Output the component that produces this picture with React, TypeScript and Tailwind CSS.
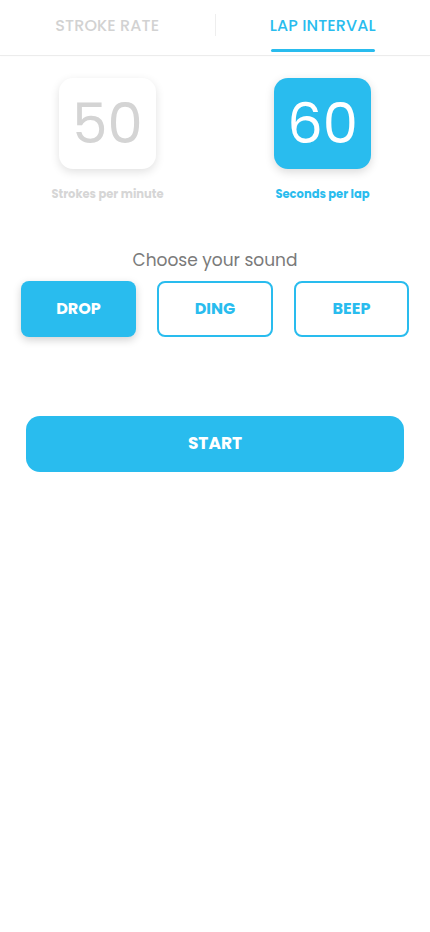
import React from "react";

const font = { fontFamily: "Poppins, 'Open Sans', 'Noto Sans', sans-serif" };

export default function App() {
  return (
    <div className="w-[430px] min-h-[932px] bg-white" style={font}>
      {/* Tabs */}
      <div className="relative flex h-[56px] border-b border-[#ececec] shadow-[0_-1px_3px_rgba(0,0,0,0.06)]">
        <div className="flex-1 flex items-center justify-center">
          <span className="text-[16px] font-medium text-[#d2d2d2] tracking-[0.1px] mb-[4px]">STROKE RATE</span>
        </div>
        <div className="w-px h-[22px] bg-[#eeeeee] mt-[14px]" />
        <div className="relative flex-1 flex items-center justify-center">
          <span className="text-[16px] font-medium text-[#29bcee] tracking-[0.1px] mb-[4px]">LAP INTERVAL</span>
          <div className="absolute left-[55px] right-[55px] bottom-[3px] h-[3px] bg-[#29bcee] rounded-full" />
        </div>
      </div>

      {/* Values */}
      <div className="flex mt-[22px]">
        <div className="flex-1 flex flex-col items-center">
          <div className="w-[97px] h-[91px] rounded-[14px] bg-white shadow-[0_3px_10px_rgba(0,0,0,0.12)] flex items-center justify-center">
            <span className="text-[56px] leading-none text-[#d4d4d4]">50</span>
          </div>
          <span className="mt-[17px] text-[11.5px] font-bold text-[#d6d6d6]">Strokes per minute</span>
        </div>
        <div className="flex-1 flex flex-col items-center">
          <div className="w-[97px] h-[91px] rounded-[14px] bg-[#29bcee] shadow-[0_3px_10px_rgba(0,0,0,0.15)] flex items-center justify-center">
            <span className="text-[56px] leading-none text-white">60</span>
          </div>
          <span className="mt-[17px] text-[11.5px] font-bold text-[#29bcee]">Seconds per lap</span>
        </div>
      </div>

      {/* Sound */}
      <div className="mt-[45px] text-center text-[17px] text-[#7a7a7a]">Choose your sound</div>
      <div className="mt-[7px] px-[21px] flex gap-[21px]">
        <button className="w-[115px] h-[56px] rounded-[8px] bg-[#29bcee] text-white text-[16px] font-bold shadow-[0_3px_8px_rgba(0,0,0,0.18)]">DROP</button>
        <button className="w-[116px] h-[56px] rounded-[8px] border-2 border-[#29bcee] text-[#29bcee] text-[16px] font-bold">DING</button>
        <button className="w-[115px] h-[56px] rounded-[8px] border-2 border-[#29bcee] text-[#29bcee] text-[16px] font-bold">BEEP</button>
      </div>

      {/* Start */}
      <div className="mt-[79px] px-[26px]">
        <button className="w-full h-[56px] rounded-[14px] bg-[#29bcee] text-white text-[17px] font-bold">START</button>
      </div>
    </div>
  );
}
